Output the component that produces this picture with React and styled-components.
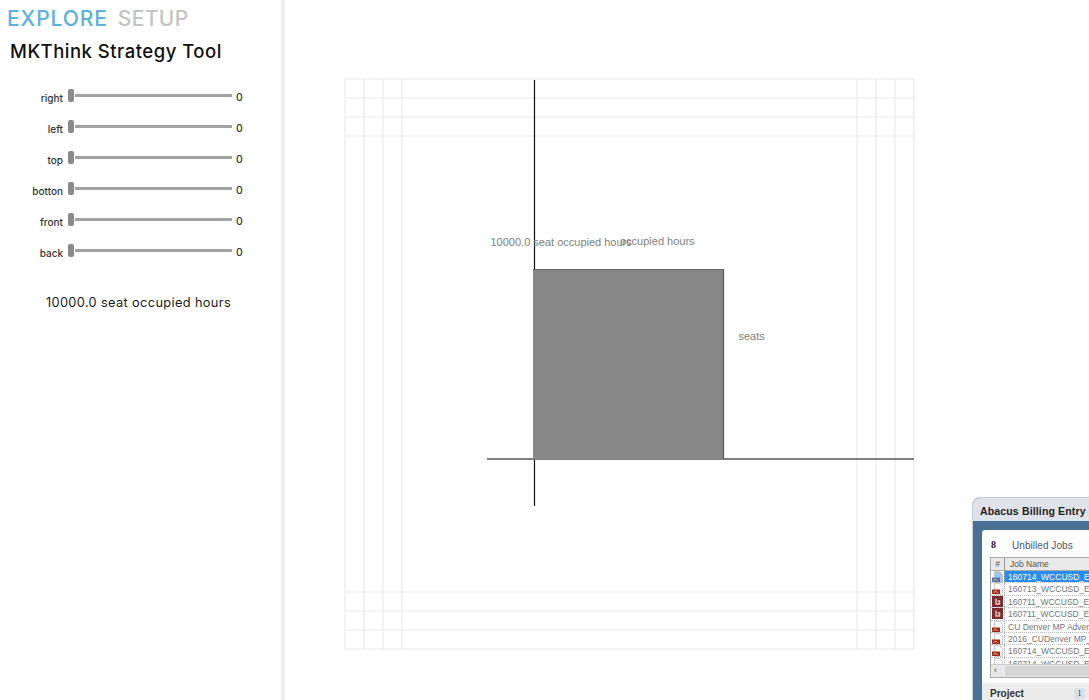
import React from "react";
import styled, { createGlobalStyle } from "styled-components";

const Global = createGlobalStyle`
  html, body { margin: 0; height: 700px; overflow: hidden; background: #fff; }
  * { box-sizing: border-box; }
`;
const Page = styled.div`
  position: relative; display: flex; width: 1089px; height: 700px; overflow: hidden;
  font-family: "Inter", "Liberation Sans", sans-serif;
`;
const Sidebar = styled.aside`
  width: 285px; height: 700px; flex: none; border-right: 4px solid #eeeeee;
  padding: 7px 0 0 7px;
`;
const Tabs = styled.div`display: flex; gap: 10px; height: 23px;`;
const Tab = styled.span`
  font-size: 21px; line-height: 23px; font-weight: 500; letter-spacing: ${p => p.$active ? "0.9px" : "0.35px"};
  color: ${p => p.$active ? "#5cb0e2" : "#c4c4c4"};
`;
const Title = styled.h1`
  margin: 9px 0 0 3px; font-size: 18.5px; line-height: 24px; font-weight: 500; color: #111; letter-spacing: 0.5px;
`;
const Sliders = styled.div`margin-top: 24px; display: flex; flex-direction: column; gap: 11px;`;
const Row = styled.div`display: flex; align-items: center; height: 20px;`;
const Label = styled.span`
  width: 56px; text-align: right; font-size: 10px; font-weight: 500; color: #333; padding-top: 1px;
`;
const Track = styled.div`
  position: relative; width: 164px; margin: -3px 4px 0 5px; height: 3px;
  background: #a2a2a2; background-clip: content-box; padding-left: 7px;
`;
const Handle = styled.div`
  position: absolute; left: 0; top: -5px; width: 6px; height: 13px; border-radius: 2px; background: #8b8b8b;
`;
const Value = styled.span`font-size: 10.5px; font-weight: 500; color: #333; padding-top: 1px;`;
const Summary = styled.p`
  margin: 32px 0 0 0; width: 263px; text-align: center; font-size: 12.8px; line-height: 18px; font-weight: 400; color: #1c1c1c; letter-spacing: 0.35px;
`;
const Main = styled.main`flex: 1; padding: 79px 0 0 60px;`;
const Chart = styled.svg`display: block; overflow: visible;`;
const ChartText = styled.text`font-family: "Liberation Sans", sans-serif; font-size: 11px; fill: #808080;`;

const AbacusWindow = styled.div`
  position: absolute; left: 972px; top: 497px; width: 130px; height: 203px;
  border-radius: 8px 0 0 0; background: #4b7096; border: 1px solid #c8ccd4; border-bottom: 0; overflow: hidden;
  font-family: "Liberation Sans", sans-serif;
`;
const AbacusTitle = styled.div`
  height: 23px; padding: 7px 0 0 7px; background: #dfe2ea; font-size: 10.5px; line-height: 12px; font-weight: 700; color: #222; letter-spacing: 0.15px;
  white-space: nowrap;
`;
const AbacusBody = styled.div`
  margin: 9px 0 0 9px; height: 153px; background: #fdfdfd; border-radius: 3px 0 0 0; padding: 7px 0 0 8px;
`;
const JobsHead = styled.div`display: flex; height: 20px; padding: 2px 0 0 1px; font-size: 10px; align-items: flex-start;`;
const Count = styled.span`font-family: "Liberation Serif", serif; font-weight: 700; width: 21px; color: #222;`;
const Heading = styled.span`color: #4f5a68; padding-top: 1px; letter-spacing: 0.05px;`;
const Table = styled.div`border: 1px solid #aaa; border-right: 0; height: 121px; overflow: hidden; position: relative;`;
const HeaderRow = styled.div`display: flex; height: 13px; background: #e9e9e9; border-bottom: 1px solid #aaa; font-size: 8.5px; line-height: 12px; color: #555;`;
const HashCell = styled.span`width: 14px; text-align: center; border-right: 1px solid #999;`;
const NameCell = styled.span`padding-left: 5px;`;
const JobRow = styled.div`
  display: flex; height: 12.4px; font-size: 8.5px; line-height: 12px; white-space: nowrap; border-bottom: 1px dotted #bbb;
  color: ${p => p.$selected ? "#fff" : "#777"};
`;
const JobIcon = styled.span`width: 13px; flex: none; display: block;`;
const JobName = styled.span`
  flex: 1; padding-left: 3px; border-left: 1px dotted #aaa;
  background: ${p => p.$selected ? "#2c8ced" : "transparent"};
`;
const ScrollBar = styled.div`
  position: absolute; left: 0; right: 0; bottom: 0; height: 13px; background: #e8e8e8; border-top: 1px solid #ccc;
  font-size: 9px; line-height: 11px; padding-left: 3px; color: #444;
`;
const ScrollThumb = styled.div`position: absolute; left: 14px; right: 0; top: 1px; bottom: 1px; background: #d6d6d6; border-radius: 2px;`;
const ProjectBar = styled.div`
  display: flex; justify-content: space-between; align-items: center; height: 20px; margin: 0 0 0 9px; background: #ececec; padding: 0 16px 0 8px;
  font-size: 10px; font-weight: 700; color: #333;
`;
const Badge = styled.span`
  width: 11px; height: 11px; background: #d8dfe6; border-radius: 2px; font-family: "Liberation Serif", serif; font-weight: 400; font-size: 8px; line-height: 11px; text-align: center;
`;

const sliders = ["right", "left", "top", "botton", "front", "back"];
const vs = [345, 364, 383, 402, 857, 876, 895, 914];
const hs = [79, 98, 117, 136, 592, 611, 630, 649];
const jobs = [
  ["160714_WCCUSD_E", "sel"], ["160713_WCCUSD_E", "pdf"], ["160711_WCCUSD_E", "red"], ["160711_WCCUSD_E", "red"],
  ["CU Denver MP Adver", "pdf"], ["2016_CUDenver MP_", "pdf"], ["160714_WCCUSD_E", "pdf"], ["160714_WCCUSD_E", "pdf"],
];

function FileIcon({ kind }) {
  if (kind === "red") return (
    <svg width="13" height="12" viewBox="0 0 13 12"><rect x="1" y="0" width="11" height="11" fill="#7d2a2e" /><path d="M5 2.5v5.5h3.5v-3H6.5" stroke="#e8c8b8" strokeWidth="1.4" fill="none" /></svg>
  );
  const page = kind === "sel" ? "#9cc6f0" : "#fafafa";
  const badge = kind === "sel" ? "#5a6fa8" : "#a52a1e";
  return (
    <svg width="13" height="12" viewBox="0 0 13 12">
      <path d="M3.5 0.5h5l3 3v8h-8z" fill={page} stroke="#bbb" strokeWidth="0.7" />
      <rect x="1" y="6.5" width="8" height="4.5" fill={badge} />
      <path d="M2.5 10l2-2.2 2 2.2" stroke="#f0d8a0" strokeWidth="0.8" fill="none" />
    </svg>
  );
}

export default function App() {
  return (
    <Page>
      <Global />
      <Sidebar>
        <Tabs><Tab $active>EXPLORE</Tab><Tab>SETUP</Tab></Tabs>
        <Title>MKThink Strategy Tool</Title>
        <Sliders>
          {sliders.map(s => (
            <Row key={s}>
              <Label>{s}</Label>
              <Track><Handle /></Track>
              <Value>0</Value>
            </Row>
          ))}
        </Sliders>
        <Summary>10000.0 seat occupied hours</Summary>
      </Sidebar>
      <Main>
        <Chart width="570" height="571" viewBox="345 79 570 571">
          {vs.map(x => <line key={x} x1={x} x2={x} y1={79} y2={649} stroke="#e6e6e6" strokeWidth="1" />)}
          {hs.map(y => <line key={y} x1={345} x2={914} y1={y} y2={y} stroke="#e9e9e9" strokeWidth="1" />)}
          <path d="M534.5 80V506" stroke="#111" strokeWidth="1.2" fill="none" />
          <path d="M487 459H914" stroke="#555" strokeWidth="1.4" fill="none" />
          <rect x="533" y="269" width="191" height="190.5" fill="#888888" />
          <path d="M723.5 269V459" stroke="#555" strokeWidth="1.2" fill="none" />
          <path d="M533 269.5H724" stroke="#666" strokeWidth="1" fill="none" />
          <ChartText x="490.5" y="246">10000.0 seat occupied hours</ChartText>
          <ChartText x="620" y="245">occupied hours</ChartText>
          <ChartText x="738.5" y="340">seats</ChartText>
        </Chart>
      </Main>
      <AbacusWindow>
        <AbacusTitle>Abacus Billing Entry</AbacusTitle>
        <AbacusBody>
          <JobsHead><Count>8</Count><Heading>Unbilled Jobs</Heading></JobsHead>
          <Table>
            <HeaderRow><HashCell>#</HashCell><NameCell>Job Name</NameCell></HeaderRow>
            {jobs.map(([name, kind], i) => (
              <JobRow key={i} $selected={kind === "sel"}>
                <JobIcon><FileIcon kind={kind} /></JobIcon>
                <JobName $selected={kind === "sel"}>{name}</JobName>
              </JobRow>
            ))}
            <ScrollBar>‹<ScrollThumb /></ScrollBar>
          </Table>
        </AbacusBody>
        <ProjectBar>Project<Badge>1</Badge></ProjectBar>
      </AbacusWindow>
    </Page>
  );
}
